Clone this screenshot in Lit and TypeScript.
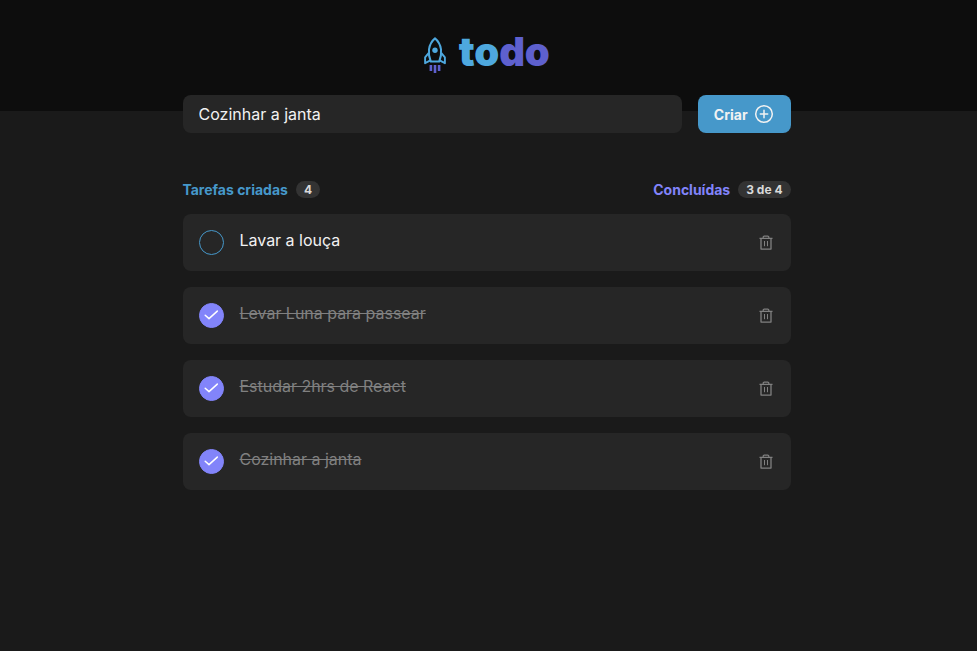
import { LitElement, html, css, svg } from "lit";
import { customElement, property, state } from "lit/decorators.js";
import { classMap } from "lit/directives/class-map.js";

interface Task {
  id: number;
  title: string;
  done: boolean;
}

const rocket = svg`
  <svg width="22" height="36" viewBox="0 0 22 36" fill="none">
    <path d="M11 1.4C8 3.8 5.7 8 5 12.4C4.5 16.6 5.2 20.8 6.8 24.5H15.2C16.8 20.8 17.5 16.6 17 12.4C16.3 8 14 3.8 11 1.4Z" stroke="#4EA8DE" stroke-width="2" stroke-linejoin="round"/>
    <path d="M4.8 15.8L1.1 20.4V26.2L6.4 23.4M17.2 15.8L20.9 20.4V26.2L15.6 23.4" stroke="#4EA8DE" stroke-width="1.9" stroke-linejoin="round"/>
    <circle cx="11" cy="13.3" r="2.7" fill="#4EA8DE"/>
    <path d="M6.9 28V34M11 28V36M15.1 28V34" stroke="#5E60CE" stroke-width="2.6"/>
  </svg>`;

const plus = svg`
  <svg width="20" height="20" viewBox="0 0 20 20" fill="none" stroke="#F2F2F2" stroke-width="1.5" stroke-linecap="round">
    <circle cx="10" cy="10" r="8.3"/>
    <path d="M10 6.3V13.7M6.3 10H13.7"/>
  </svg>`;

const check = svg`
  <svg width="15" height="11" viewBox="0 0 15 11" fill="none" stroke="#FFFFFF" stroke-width="1.5" stroke-linecap="round" stroke-linejoin="round">
    <path d="M1.2 5.2L5 8.6L13.3 1.1"/>
  </svg>`;

const trash = svg`
  <svg width="14" height="16" viewBox="0 0 14 16" fill="none" stroke="#808080">
    <path d="M0.5 3.3H13.5M2 3.3V14.1H12V3.3" stroke-width="1.3" stroke-linejoin="round"/>
    <path d="M4.2 3.1V2.1C4.2 1.4 4.6 1.1 5.2 1.1H8.8C9.4 1.1 9.8 1.4 9.8 2.1V3.1" stroke-width="1.2"/>
    <path d="M5.5 6V11.2M8.5 6V11.2"/>
  </svg>`;

@customElement("todo-item")
export class TodoItem extends LitElement {
  @property({ attribute: false }) task!: Task;

  static styles = css`
    :host {
      display: flex;
      box-sizing: border-box;
      height: 57px;
      padding: 16px;
      border-radius: 8px;
      background: #262626;
      color: #f2f2f2;
      align-items: flex-start;
    }
    button {
      border: 0;
      padding: 0;
      background: none;
      cursor: pointer;
      display: flex;
      align-items: center;
      justify-content: center;
    }
    .toggle {
      box-sizing: border-box;
      width: 25px;
      height: 25px;
      border-radius: 50%;
      border: 1px solid #4698ca;
      flex: none;
    }
    .toggle.done {
      border-color: #8284fa;
      background: #8284fa;
    }
    .title {
      flex: 1;
      margin: 0 0 0 15.5px;
      font-size: 16px;
      line-height: 21px;
      letter-spacing: -0.02px;
    }
    .title.done {
      color: #808080;
      text-decoration: line-through;
    }
    .remove {
      width: 18px;
      height: 25px;
    }
  `;

  private emit(name: string) {
    this.dispatchEvent(new CustomEvent(name, { detail: this.task.id }));
  }

  render() {
    const done = this.task.done;
    return html`
      <button class=${classMap({ toggle: true, done })} aria-label="Concluir" @click=${() => this.emit("toggle-task")}>
        ${done ? check : ""}
      </button>
      <p class=${classMap({ title: true, done })}>${this.task.title}</p>
      <button class="remove" aria-label="Excluir" @click=${() => this.emit("remove-task")}>${trash}</button>
    `;
  }
}

@customElement("app-root")
export class AppRoot extends LitElement {
  @state() private draft = "Cozinhar a janta";
  @state() private tasks: Task[] = [
    { id: 1, title: "Lavar a louça", done: false },
    { id: 2, title: "Levar Luna para passear", done: true },
    { id: 3, title: "Estudar 2hrs de React", done: true },
    { id: 4, title: "Cozinhar a janta", done: true },
  ];

  static styles = css`
    :host {
      display: block;
      min-height: 100vh;
      background: #1a1a1a;
      font-family: Inter, sans-serif;
    }
    header {
      box-sizing: border-box;
      height: 111px;
      padding: 37px 3px 0 0;
      background: #0d0d0d;
      display: flex;
      justify-content: center;
      gap: 12.5px;
    }
    .word {
      font-size: 40px;
      line-height: 30px;
      font-weight: 900;
      letter-spacing: -0.1px;
      color: #5e60ce;
    }
    .word .to {
      color: #4ea8de;
    }
    .page {
      width: 608px;
      margin: -16px auto 0;
      padding-right: 3px;
    }
    form {
      display: flex;
      gap: 16px;
      height: 38px;
    }
    input {
      flex: 1;
      min-width: 0;
      box-sizing: border-box;
      border: 0;
      outline: 0;
      border-radius: 8px;
      padding: 0 15.5px;
      background: #262626;
      color: #f2f2f2;
      font: 400 16px Inter, sans-serif;
    }
    .create {
      width: 93px;
      border: 0;
      border-radius: 8px;
      padding: 0 1px 0 0;
      background: #4698ca;
      color: #f2f2f2;
      font: 700 14px Inter, sans-serif;
      display: flex;
      align-items: center;
      justify-content: center;
      gap: 6.5px;
    }
    .summary {
      margin-top: 48px;
      height: 17px;
      display: flex;
      justify-content: space-between;
      font-size: 14px;
      font-weight: 700;
    }
    .count {
      display: flex;
      align-items: center;
      gap: 8px;
      color: #4698ca;
    }
    .count:first-child {
      margin-left: -0.6px;
    }
    .count.finished {
      color: #8284fa;
    }
    .badge {
      padding: 0 8px;
      border-radius: 9px;
      background: #333333;
      color: #d9d9d9;
      font-size: 12px;
      line-height: 17px;
    }
    .finished .badge {
      padding: 0 8.5px 0 8px;
    }
    .list {
      margin-top: 16px;
      display: flex;
      flex-direction: column;
      gap: 16px;
    }
  `;

  private create(e: Event) {
    e.preventDefault();
    const title = this.draft.trim();
    if (!title) return;
    this.tasks = [...this.tasks, { id: Date.now(), title, done: false }];
    this.draft = "";
  }

  private toggle(id: number) {
    this.tasks = this.tasks.map((t) => (t.id === id ? { ...t, done: !t.done } : t));
  }

  private remove(id: number) {
    this.tasks = this.tasks.filter((t) => t.id !== id);
  }

  render() {
    const finished = this.tasks.filter((t) => t.done).length;
    return html`
      <header>
        ${rocket}
        <div class="word"><span class="to">to</span>do</div>
      </header>
      <main class="page">
        <form @submit=${this.create}>
          <input
            .value=${this.draft}
            @input=${(e: Event) => (this.draft = (e.target as HTMLInputElement).value)}
          />
          <button class="create">Criar ${plus}</button>
        </form>
        <div class="summary">
          <div class="count">Tarefas criadas <span class="badge">${this.tasks.length}</span></div>
          <div class="count finished">
            Concluídas <span class="badge">${finished} de ${this.tasks.length}</span>
          </div>
        </div>
        <section class="list">
          ${this.tasks.map(
            (task) => html`<todo-item
              .task=${task}
              @toggle-task=${() => this.toggle(task.id)}
              @remove-task=${() => this.remove(task.id)}
            ></todo-item>`
          )}
        </section>
      </main>
    `;
  }
}
